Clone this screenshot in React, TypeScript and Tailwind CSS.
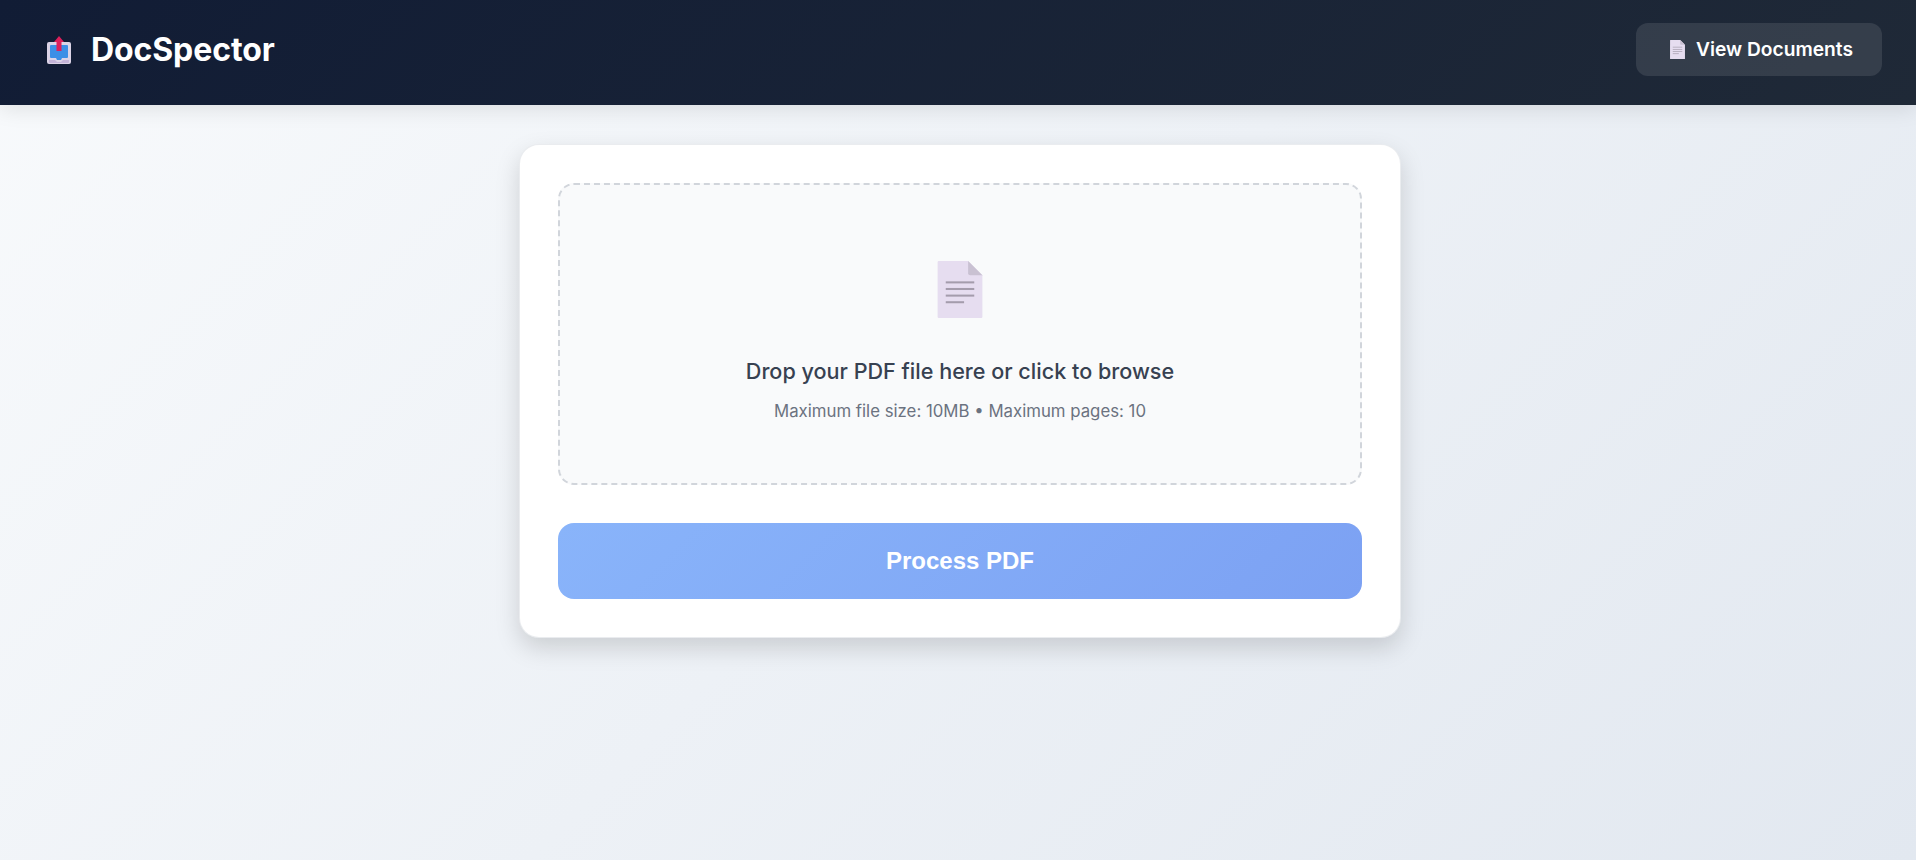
const font = { fontFamily: "Inter, 'Liberation Sans', sans-serif" };

function DocIcon({ className }: { className: string }) {
  return (
    <svg viewBox="0 0 44 56" className={className}>
      <path d="M1 0H30L44 14V55a1 1 0 0 1-1 1H1a1 1 0 0 1-1-1V1a1 1 0 0 1 1-1Z" fill="#e6ddf0" />
      <path d="M30 0L44 14H32a2 2 0 0 1-2-2Z" fill="#c9c1d2" />
      <g fill="#a49cac">
        <rect x="8" y="20" width="28" height="2" />
        <rect x="8" y="26.500" width="28" height="2" />
        <rect x="8" y="33" width="28" height="2" />
        <rect x="8" y="39.500" width="18" height="2" />
      </g>
    </svg>
  );
}

function UploadIcon() {
  return (
    <svg viewBox="0 0 24 28" className="h-[28px] w-[24px]">
      <rect x="0" y="6" width="24" height="22" rx="2" fill="#dbd3e6" />
      <path d="M3 10a1 1 0 0 1 1-1H20a1 1 0 0 1 1 1V21a1 1 0 0 1-1 1H15L14 24H10L9 22H4a1 1 0 0 1-1-1Z" fill="#3b8fe6" />
      <path d="M2 24H8L10 26H14L16 24H22V26a1 1 0 0 1-1 1H3a1 1 0 0 1-1-1Z" fill="#c4b4d8" />
      <path d="M12 0L17 6H14.500V15H9.500V6H7Z" fill="#dc1f5a" />
    </svg>
  );
}

export default function App() {
  return (
    <div style={font} className="min-h-screen bg-[linear-gradient(135deg,#f8fafc_0%,#e2e8f0_100%)] flex flex-col">
      <header className="h-[105px] flex items-center justify-between pl-[47px] pr-[34px] pb-[6px] bg-[linear-gradient(135deg,#111c35_0%,#1f2937_100%)] shadow-[0_4px_20px_rgba(0,0,0,0.1)]">
        <div className="flex items-center gap-[20px]">
          <UploadIcon />
          <h1 className="text-[32px] font-bold text-white leading-none tracking-[-0.1px]">DocSpector</h1>
        </div>
        <button className="flex items-center gap-[11px] h-[53px] w-[246px] justify-center pl-[5px] rounded-xl bg-white/10 text-white font-semibold text-[19.200px]">
          <DocIcon className="w-[15px] h-[19px]" />
          <span>View Documents</span>
        </button>
      </header>
      <main className="flex-1 flex justify-center pt-[39px] pl-[4px]">
        <div className="self-start w-[882px] bg-white rounded-[20px] border border-[#e5e7eb]/80 p-[38px] flex flex-col gap-[38px] shadow-[0_10px_25px_rgba(0,0,0,0.15)]">
          <div className="h-[302px] rounded-2xl border-2 border-dashed border-[#d1d5db] bg-[#f9fafb] flex flex-col items-center pt-[76px]">
            <DocIcon className="w-[46px] h-[57px]" />
            <p className="mt-[37px] text-[21.600px] font-medium text-[#374151] leading-[32px]">Drop your PDF file here or click to browse</p>
            <p className="mt-[12px] text-[16.800px] text-[#6b7280] leading-6">Maximum file size: 10MB • Maximum pages: 10</p>
          </div>
          <button style={{ fontFamily: "'Liberation Sans', Arial, sans-serif" }} className="h-[76px] rounded-2xl text-white text-[24px] font-bold bg-[linear-gradient(135deg,#89b4fa_0%,#7ca1f3_100%)]">Process PDF</button>
        </div>
      </main>
    </div>
  );
}
